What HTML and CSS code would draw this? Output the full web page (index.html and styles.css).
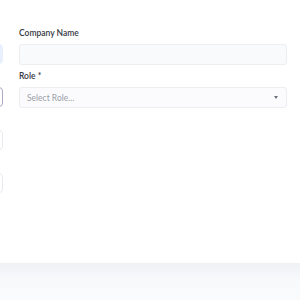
FILE: index.html
```html
<!DOCTYPE html>
<html>
 <head>
  <title>Company</title>
  <meta charset="utf-8" />
	<link rel="stylesheet" href="styles.css">
 </head>
 <body>
	<div class="page">
		<div class="rail">
			<div class="tile active"></div>
			<div class="tile outlined"></div>
			<div class="tile"></div>
			<div class="tile"></div>
		</div>
		<div class="form">
			<label class="label">Company Name</label>
			<div class="field"></div>
			<label class="label">Role *</label>
			<div class="field select">
				<span class="placeholder">Select Role...</span>
				<span class="caret"></span>
			</div>
		</div>
	</div>
	<div class="footer"></div>
 </body>
</html>
```

FILE: styles.css
```css
html, body {margin: 0; padding: 0; background: #fff;}
body {width: 300px; height: 300px; overflow: hidden; font-family: "Lato", "Open Sans", sans-serif; color: #2b2f38; position: relative;}
.page {display: flex; height: 263px;}
.rail {width: 3px; overflow: hidden; padding-top: 44px; display: flex; flex-direction: column; gap: 23px;}
.tile {width: 40px; height: 20px; margin-left: -37px; border: 1px solid #e8e9ee; border-radius: 4px; box-sizing: border-box; flex: none;}
.tile.active {background: #e9f0fd; border-color: #e9f0fd;}
.tile.outlined {border-color: #a9a8c6;}
.form {flex: 1; padding: 28px 13px 0 16px; display: flex; flex-direction: column;}
.label {font-size: 8.5px; font-weight: 600; height: 11px; line-height: 11px; margin-bottom: 5px; color: #353943;}
.field {height: 21px; box-sizing: border-box; background: #f9fafc; border: 1px solid #eceef2; border-radius: 3px; margin-bottom: 6px; box-shadow: 0 0 1px rgba(0,0,0,0.04);}
.select {display: flex; align-items: center; justify-content: space-between; padding: 0 8px 0 7px; background: #fbfbfd;}
.placeholder {font-size: 8.5px; color: #9a9ea8;}
.caret {width: 0; height: 0; border-left: 2.5px solid transparent; border-right: 2.5px solid transparent; border-top: 3px solid #6b6f78;}
.footer {position: absolute; left: 0; right: 0; top: 263px; bottom: 0; background: linear-gradient(#f0f1f5, #f8f9fb 16px, #fafbfc);}
```
